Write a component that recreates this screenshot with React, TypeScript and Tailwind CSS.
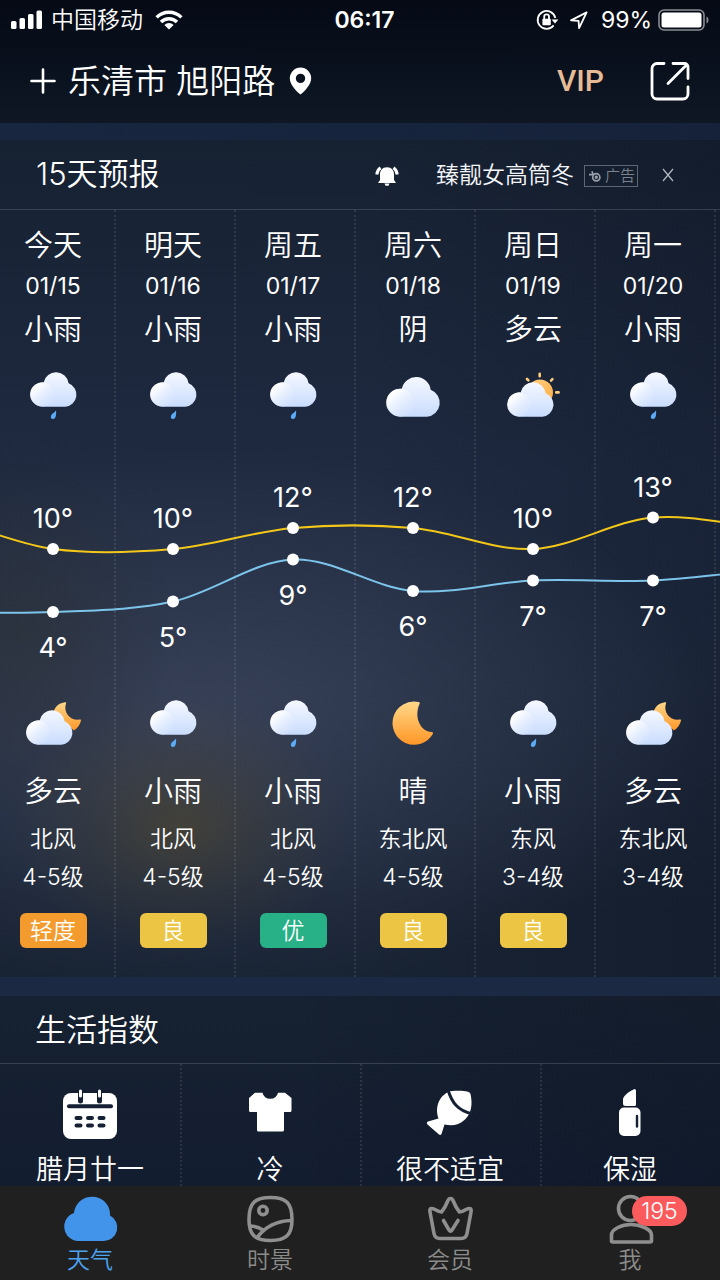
import type { ReactNode } from 'react';

type Sky = 'rain' | 'cloudy' | 'sunCloud' | 'moonCloud' | 'moon';

interface Day {
  name: string;
  date: string;
  day: string;
  dayIcon: Sky;
  high: number;
  low: number;
  night: string;
  nightIcon: Sky;
  wind: string;
  level: string;
  air?: string;
}

const days: Day[] = [
  { name: '今天', date: '01/15', day: '小雨', dayIcon: 'rain', high: 10, low: 4, night: '多云', nightIcon: 'moonCloud', wind: '北风', level: '4-5级', air: '轻度' },
  { name: '明天', date: '01/16', day: '小雨', dayIcon: 'rain', high: 10, low: 5, night: '小雨', nightIcon: 'rain', wind: '北风', level: '4-5级', air: '良' },
  { name: '周五', date: '01/17', day: '小雨', dayIcon: 'rain', high: 12, low: 9, night: '小雨', nightIcon: 'rain', wind: '北风', level: '4-5级', air: '优' },
  { name: '周六', date: '01/18', day: '阴', dayIcon: 'cloudy', high: 12, low: 6, night: '晴', nightIcon: 'moon', wind: '东北风', level: '4-5级', air: '良' },
  { name: '周日', date: '01/19', day: '多云', dayIcon: 'sunCloud', high: 10, low: 7, night: '小雨', nightIcon: 'rain', wind: '东风', level: '3-4级', air: '良' },
  { name: '周一', date: '01/20', day: '小雨', dayIcon: 'rain', high: 13, low: 7, night: '多云', nightIcon: 'moonCloud', wind: '东北风', level: '3-4级' },
];

const airColors: Record<string, string> = {
  轻度: 'bg-[#f39c2d]',
  良: 'bg-[#ecc544]',
  优: 'bg-[#28b086]',
};

// temperatures of the neighbouring days, so the curves run off both edges
const highs = [13, ...days.map((d) => d.high), 12, 12];
const lows = [4, ...days.map((d) => d.low), 8, 8];

const COLUMN = 120;
const toX = (i: number) => 57 + COLUMN * i;
const toY = (t: number) => 124 + (10 - t) * 10.5;

const curve = (temps: number[]) => {
  const ys = temps.map(toY);
  let d = `M${toX(-1)} ${ys[0]}`;
  for (let i = 0; i < ys.length - 1; i++) {
    const before = ys[i - 1] ?? ys[i];
    const after = ys[i + 2] ?? ys[i + 1];
    const x = toX(i - 1);
    d += ` C${x + 40} ${ys[i] + (ys[i + 1] - before) / 6} ${x + 80} ${
      ys[i + 1] - (after - ys[i]) / 6
    } ${x + COLUMN} ${ys[i + 1]}`;
  }
  return d;
};

const Gradients = () => (
  <svg className="absolute size-0" aria-hidden="true">
    <defs>
      <linearGradient id="cloud" x1="0" y1="0" x2="0" y2="1">
        <stop offset="0" stopColor="#f5f8ff" />
        <stop offset="1" stopColor="#c9dcfd" />
      </linearGradient>
      <linearGradient id="puff" x1="0" y1="0" x2="1" y2="1">
        <stop offset="0.2" stopColor="#ffffff" />
        <stop offset="0.9" stopColor="#d3e2fd" stopOpacity="0.4" />
      </linearGradient>
      <linearGradient id="moon" x1="0" y1="0" x2="0" y2="1">
        <stop offset="0" stopColor="#ffd88a" />
        <stop offset="1" stopColor="#ff9626" />
      </linearGradient>
      <linearGradient id="sun" x1="0" y1="0" x2="1" y2="1">
        <stop offset="0" stopColor="#ffd287" />
        <stop offset="1" stopColor="#ffa940" />
      </linearGradient>
    </defs>
  </svg>
);

const Cloud = ({ transform }: { transform?: string }) => (
  <g transform={transform}>
    <path
      d="M19 41.7A12.1 12.1 0 1 1 20.6 17.4A12.7 12.7 0 0 1 45.6 18.3A12.1 12.1 0 0 1 42.3 41.7Z"
      fill="url(#cloud)"
    />
    <circle cx="19.2" cy="29.5" r="12.1" fill="url(#puff)" />
  </g>
);

const SkyIcon = ({ sky }: { sky: Sky }) => (
  <svg viewBox="0 0 60 60" className="size-[60px]" aria-hidden="true">
    {sky === 'rain' && (
      <>
        <Cloud />
        <path
          d="M33 45.5C33.4 48 33.2 54 30.2 54C28 54 27.2 51.8 28.4 50C29.5 48.3 31.6 47.6 33 45.5Z"
          fill="#5aaaf5"
        />
      </>
    )}
    {sky === 'cloudy' && <Cloud transform="translate(-5 3.6) scale(1.155)" />}
    {sky === 'sunCloud' && (
      <>
        <circle cx="37" cy="27.5" r="13" fill="url(#sun)" />
        <path
          d="M36.7 8.8v2.4M53.2 27.4h2.4M48 15.6l1.4-1.4M25.4 15.4l-1.4-1.4"
          stroke="#ffcf7c"
          strokeWidth="2.6"
          strokeLinecap="round"
        />
        <Cloud transform="translate(-3 10)" />
      </>
    )}
    {sky === 'moonCloud' && (
      <>
        <path
          d="M42 9.2C43 9 43.3 9.6 43 10.4C40 19 47 28 56.8 26.6C57.8 26.5 58.2 27 57.9 28C56.8 32 54.5 35.3 50.8 37.5L30.8 18C32.5 13 36.5 10 42 9.2Z"
          fill="url(#moon)"
        />
        <Cloud transform="translate(-4 10)" />
      </>
    )}
    {sky === 'moon' && (
      <path
        d="M35.4 9C36.8 9.1 37 9.8 36.5 11C30.5 25 38 38.6 48.6 39C49.9 39 50.4 39.8 49.8 41A21.6 21.6 0 1 1 35.4 9Z"
        fill="url(#moon)"
      />
    )}
  </svg>
);

const TemperatureChart = () => (
  <svg
    className="absolute left-0 top-[215px] h-[268px] w-[840px] font-normal"
    viewBox="0 0 840 268"
    role="img"
    aria-label="15天气温"
  >
    <path d={curve(highs)} fill="none" stroke="#f2c71a" strokeWidth="2" />
    <path d={curve(lows)} fill="none" stroke="#7cc4ea" strokeWidth="2" />
    {days.map(({ date, high, low }, i) => (
      <g key={date} fill="white" fontSize="27" textAnchor="middle">
        <circle cx={toX(i)} cy={toY(high)} r="6" />
        <text x={toX(i)} y={toY(high) - 21}>
          {high}°
        </text>
        <circle cx={toX(i)} cy={toY(low)} r="6" />
        <text x={toX(i)} y={toY(low) + 45}>
          {low}°
        </text>
      </g>
    ))}
  </svg>
);

const DayColumn = ({ day }: { day: Day }) => (
  <li className="flex w-[120px] shrink-0 flex-col items-center border-r-2 border-dotted border-white/10 pt-[15px] pr-1 pb-[29px]">
    <h3 className="text-[29px] leading-[42px]">{day.name}</h3>
    <time className="text-[23px] leading-[38px] font-normal">{day.date}</time>
    <p className="mb-2.5 text-[29px] leading-[50px]">{day.day}</p>
    <SkyIcon sky={day.dayIcon} />
    <div className="h-[268px]" />
    <SkyIcon sky={day.nightIcon} />
    <p className="mt-3.5 mb-[3px] text-[29px] leading-[50px]">{day.night}</p>
    <p className="text-[23px] leading-[38px]">{day.wind}</p>
    <p className="text-[23px] leading-[38px]">{day.level}</p>
    {day.air && (
      <span
        className={`mt-[17px] h-[35px] w-[67px] rounded-md text-center text-[23px] leading-9 ${airColors[day.air]}`}
      >
        {day.air}
      </span>
    )}
  </li>
);

const StatusBar = () => (
  <div className="grid h-10 grid-cols-3 items-center pr-2.5 pl-[11px] text-[23px]">
    <div className="flex items-center gap-2">
      <svg viewBox="0 0 32 20" className="h-5 w-8" fill="white" aria-hidden="true">
        <rect x="0" y="11" width="5.5" height="8" rx="1.5" />
        <rect x="8.5" y="8" width="5.5" height="11" rx="1.5" />
        <rect x="17" y="4" width="5.5" height="15" rx="1.5" />
        <rect x="25.5" y="0.5" width="5.5" height="18.5" rx="1.5" />
      </svg>
      <span className="whitespace-nowrap">中国移动</span>
      <svg viewBox="0 0 28 20" className="ml-1 h-5 w-7" fill="none" stroke="white" strokeWidth="3.4" aria-hidden="true">
        <path d="M1.6 7.4a17.5 17.5 0 0 1 24.8 0" />
        <path d="M6 12a11.3 11.3 0 0 1 16 0" />
        <path d="M14 19.5L9.4 15a6.5 6.5 0 0 1 9.2 0Z" fill="white" stroke="none" />
      </svg>
    </div>
    <time className="pl-2 text-center font-semibold">06:17</time>
    <div className="flex items-center justify-end">
      <svg viewBox="0 0 24 24" className="h-6 w-6" fill="none" stroke="white" strokeWidth="1.8" aria-hidden="true">
        <path d="M18.6 17.4A8.9 8.9 0 1 1 20.3 10" />
        <path d="M16.6 11.5h6.8L20 15.6Z" fill="white" stroke="none" />
        <rect x="7.4" y="10.8" width="8.4" height="6.4" rx="1" fill="white" stroke="none" />
        <path d="M9.2 11V8.8a2.4 2.4 0 0 1 4.8 0V11" />
      </svg>
      <svg viewBox="0 0 20 20" className="ml-2.5 h-5 w-5" fill="none" stroke="white" strokeWidth="1.8" strokeLinejoin="round" aria-hidden="true">
        <path d="M17.6 2.4L2 10.4l7.6.5.5 7.2Z" />
      </svg>
      <span className="ml-3 font-normal">99%</span>
      <svg viewBox="0 0 52 22" className="ml-1.5 h-[22px] w-[52px]" aria-hidden="true">
        <rect x="1" y="1" width="45" height="20" rx="5" fill="none" stroke="#8b8d92" strokeWidth="1.6" />
        <rect x="3.5" y="3.5" width="40" height="15" rx="2.5" fill="white" />
        <path d="M48.5 7.5c2.6.8 2.6 6.2 0 7Z" fill="#8b8d92" />
      </svg>
    </div>
  </div>
);

const Header = () => (
  <header className="flex h-[83px] items-center px-[30px] pb-0.5">
    <button type="button" aria-label="添加城市">
      <svg viewBox="0 0 26 26" className="size-[26px]" stroke="white" strokeWidth="2.6" strokeLinecap="round" aria-hidden="true">
        <path d="M13 1.5v23M1.5 13h23" />
      </svg>
    </button>
    <h1 className="ml-3 text-[33px] leading-[48px] whitespace-nowrap">乐清市 旭阳路</h1>
    <svg viewBox="0 0 22 28" className="ml-3.5 h-7 w-[23px]" aria-hidden="true">
      <path
        d="M11 0.5A10.7 10.7 0 0 0 0.3 11.2C0.3 17 6 23.5 11 27.5C16 23.5 21.7 17 21.7 11.2A10.7 10.7 0 0 0 11 0.5ZM11 6.7A4.7 4.7 0 1 1 11 16.1A4.7 4.7 0 0 1 11 6.7Z"
        fill="white"
        fillRule="evenodd"
      />
    </svg>
    <a href="#vip" className="ml-auto font-['Roboto'] text-[30px] leading-none font-medium text-[#e6bb96]">
      VIP
    </a>
    <button type="button" className="ml-[46px]" aria-label="分享">
      <svg
        viewBox="0 0 40 40"
        className="size-10"
        fill="none"
        stroke="white"
        strokeWidth="2.8"
        strokeLinecap="round"
        strokeLinejoin="round"
        aria-hidden="true"
      >
        <path d="M14 2.5H7A5 5 0 0 0 2 7.5V33A5 5 0 0 0 7 38H33A5 5 0 0 0 38 33V26" />
        <path d="M23 2.5H34.5A3.5 3.5 0 0 1 38 6V17.5M36.5 4L18 22.5" />
      </svg>
    </button>
  </header>
);

const Forecast = () => (
  <section className="bg-[radial-gradient(ellipse_170px_130px_at_180px_685px,rgba(88,75,40,0.5),rgba(88,75,40,0.22)_45%,transparent),radial-gradient(ellipse_150px_200px_at_20px_490px,rgba(44,48,50,0.5),transparent),radial-gradient(ellipse_520px_270px_at_200px_580px,rgba(68,76,100,0.65),rgba(60,70,92,0.4)_50%,transparent),linear-gradient(to_right,transparent_50%,rgba(8,14,26,0.25)),linear-gradient(#162132,#1f2a41_40%,#202b40_65%,#192334_92%,#182334)]">
    <div className="flex h-[70px] items-center border-b border-white/15 pr-[46px] pl-9">
      <h2 className="text-[31px]">15天预报</h2>
      <a href="#ad" className="ml-auto flex items-center pt-0.5 text-[#f2f4f7]">
        <svg viewBox="0 0 24 20" className="h-5 w-6" fill="white" aria-hidden="true">
          <path d="M12 1.2C16.8 1.2 19 4.5 19 8.5V14L21 17H3L5 14V8.5C5 4.5 7.2 1.2 12 1.2Z" />
          <path d="M9.5 17.5h5L13.5 19.8h-3Z" />
          <path d="M5.5 1.8Q2.3 4 1.8 8.5M18.5 1.8Q21.7 4 22.2 8.5" fill="none" stroke="white" strokeWidth="3" />
        </svg>
        <span className="ml-[37px] text-[23px]">臻靓女高筒冬</span>
        <small className="ml-2.5 flex h-[22px] items-center gap-1 border border-[#5d6672] px-0.5 text-[15px] leading-5 text-[#7c838d]">
          <svg viewBox="0 0 14 14" className="ml-0.5 size-3" fill="none" stroke="#9aa0a8" strokeWidth="2" aria-hidden="true">
            <circle cx="8.5" cy="8.5" r="4.2" />
            <circle cx="8.5" cy="8.5" r="1" />
            <path d="M0 5.5h5M3.5 1.5L5 6" />
          </svg>
          广告
        </small>
      </a>
      <button type="button" className="ml-6" aria-label="关闭">
        <svg viewBox="0 0 12 14" className="h-3.5 w-3" stroke="#b4b9c1" strokeWidth="1.2" aria-hidden="true">
          <path d="M1 1L11 13M11 1L1 13" />
        </svg>
      </button>
    </div>
    <div className="overflow-x-auto [scrollbar-width:none]">
      <div className="relative -ml-1 w-max">
        <ul className="flex">
          {days.map((day) => (
            <DayColumn key={day.date} day={day} />
          ))}
          <li className="w-[120px] shrink-0" />
        </ul>
        <TemperatureChart />
      </div>
    </div>
  </section>
);

const indices: { label: string; icon: ReactNode }[] = [
  {
    label: '腊月廿一',
    icon: (
      <>
        <rect x="3" y="9" width="54" height="46" rx="8" fill="white" />
        <path d="M20.5 6v11M39.5 6v11" stroke="#152033" strokeWidth="5" strokeLinecap="round" />
        <path d="M20.5 7v5M39.5 7v5" stroke="white" strokeWidth="3" strokeLinecap="round" />
        <path d="M9 22.3h42" stroke="#152033" strokeWidth="4" strokeLinecap="round" />
        <path
          d="M16.5 34h4M28 34h4M39.5 34h4M16.5 41.5h4M28 41.5h4M39.5 41.5h4"
          stroke="#152033"
          strokeWidth="4"
          strokeLinecap="round"
        />
      </>
    ),
  },
  {
    label: '冷',
    icon: (
      <path
        d="M15 8.7H22.5A8 8 0 0 0 38 8.7H45L51.5 14V26.5Q51.5 28 50 28H44V46Q44 47.5 42.5 47.5H18.5Q17 47.5 17 46V28H10.5Q9 28 9 26.5V14Z"
        fill="white"
      />
    ),
  },
  {
    label: '很不适宜',
    icon: (
      <>
        <path
          d="M30 7.2C42 6 50 7 50.5 10C53 21 51 30 45 35.5C38.5 41.5 32 42 24.5 40.5L21.5 50Q20.5 51.5 19 50.5L7.5 40.5Q6 38.5 8 37.5L18.5 34.5C15 24 18 12 30 7.2Z"
          fill="white"
        />
        <path d="M28 6C32 19 38 26.5 52 30" fill="none" stroke="#152033" strokeWidth="3" />
      </>
    ),
  },
  {
    label: '保湿',
    icon: (
      <>
        <path d="M23 14.5Q26 8.5 34.5 5Q36 5 36 6.5V20.5Q36 22 34.5 22H25.5Q23 22 23 20Z" fill="white" />
        <rect x="19" y="23.5" width="21.5" height="28.5" rx="5" fill="white" />
        <path d="M37 32v10.5" stroke="#152033" strokeWidth="2.4" strokeLinecap="round" />
      </>
    ),
  },
];

const LifeIndex = () => (
  <section className="flex-1 bg-[linear-gradient(to_right,transparent_40%,rgba(8,14,26,0.25)),linear-gradient(#162131,#131d30)]">
    <h2 className="h-[68px] border-b border-white/15 pl-[35px] text-[31px] leading-[68px]">生活指数</h2>
    <ul className="grid grid-cols-4">
      {indices.map(({ label, icon }) => (
        <li
          key={label}
          className="flex flex-col items-center border-l-2 border-dotted border-white/10 pt-5 pr-0.5 first:border-transparent"
        >
          <svg viewBox="0 0 60 60" className="size-[60px]" aria-hidden="true">
            {icon}
          </svg>
          <span className="mt-2.5 text-[27px] leading-8">{label}</span>
        </li>
      ))}
    </ul>
  </section>
);

const tabs: { label: string; icon: ReactNode; badge?: number }[] = [
  {
    label: '天气',
    icon: (
      <path
        d="M18 47A14.4 14.4 0 0 1 14 19A18 17.5 0 0 1 50 21.5A13.5 13.5 0 0 1 43.5 47Z"
        fill="#4294eb"
        stroke="none"
      />
    ),
  },
  {
    label: '时景',
    icon: (
      <>
        <path d="M30.5 3.5C46 3.5 52 9 52 25.5C52 41 46 46.5 30.5 46.5C15 46.5 9 41 9 25.5C9 9 15 3.5 30.5 3.5Z" />
        <circle cx="23" cy="16.5" r="4.2" />
        <path d="M10 32Q17 32 23 36M17.5 43Q30 27 51 26.5" />
      </>
    ),
  },
  {
    label: '会员',
    icon: (
      <>
        <path d="M30.5 4.5Q32.5 4.5 33.5 7.5Q36 14 39.5 18Q43 17.5 46 15.5Q52 12.5 51 18L47 39.5Q46 44.5 41 44.5H20Q15 44.5 14 39.5L10 18Q9 12.5 15 15.5Q18 17.5 21.5 18Q25 14 27.5 7.5Q28.5 4.5 30.5 4.5Z" />
        <path d="M23.5 26.5L29 36Q30.5 38.5 32 36L38 26.5" />
      </>
    ),
  },
  {
    label: '我',
    badge: 195,
    icon: (
      <>
        <circle cx="30.5" cy="14.5" r="12" />
        <path d="M11.5 47V41C11.5 35 22 30.5 31 30.5C40 30.5 51.5 35 51.5 41V47Q51.5 48 50 48H13Q11.5 48 11.5 47Z" />
      </>
    ),
  },
];

const TabBar = () => (
  <nav className="grid shrink-0 grid-cols-4 bg-[#202020] pt-2 pb-[5px]">
    {tabs.map(({ label, icon, badge }, i) => (
      <a
        key={label}
        href={`#tab-${i}`}
        className={`flex flex-col items-center ${i === 0 ? 'text-[#4ba2ef]' : 'text-[#8c8c8c]'}`}
      >
        <span className="relative">
          <svg
            viewBox="0 0 60 50"
            className="h-[50px] w-[60px]"
            fill="none"
            stroke="#8f8f8f"
            strokeWidth="3.6"
            strokeLinecap="round"
            strokeLinejoin="round"
            aria-hidden="true"
          >
            {icon}
          </svg>
          {badge && (
            <span className="absolute top-0.5 left-8 h-[30px] w-[55px] rounded-full bg-[#fb5b5c] text-center text-[23px] leading-[30px] text-white">
              {badge}
            </span>
          )}
        </span>
        <span className="mt-px text-[23px] leading-[30px]">{label}</span>
      </a>
    ))}
  </nav>
);

export default function App() {
  return (
    <div className="flex h-screen flex-col overflow-hidden bg-[linear-gradient(to_right,#18263f,#15223a)] font-['Inter','Noto_Sans_CJK_SC',sans-serif] font-[350] text-white">
      <Gradients />
      <div className="shrink-0 bg-linear-to-b from-[#050a15] to-[#0f1725]">
        <StatusBar />
        <Header />
      </div>
      <main className="flex min-h-0 flex-1 flex-col overflow-y-auto pt-[17px] [scrollbar-width:none]">
        <Forecast />
        <div className="h-[19px] shrink-0 bg-[#1b2942]" />
        <LifeIndex />
      </main>
      <TabBar />
    </div>
  );
}
